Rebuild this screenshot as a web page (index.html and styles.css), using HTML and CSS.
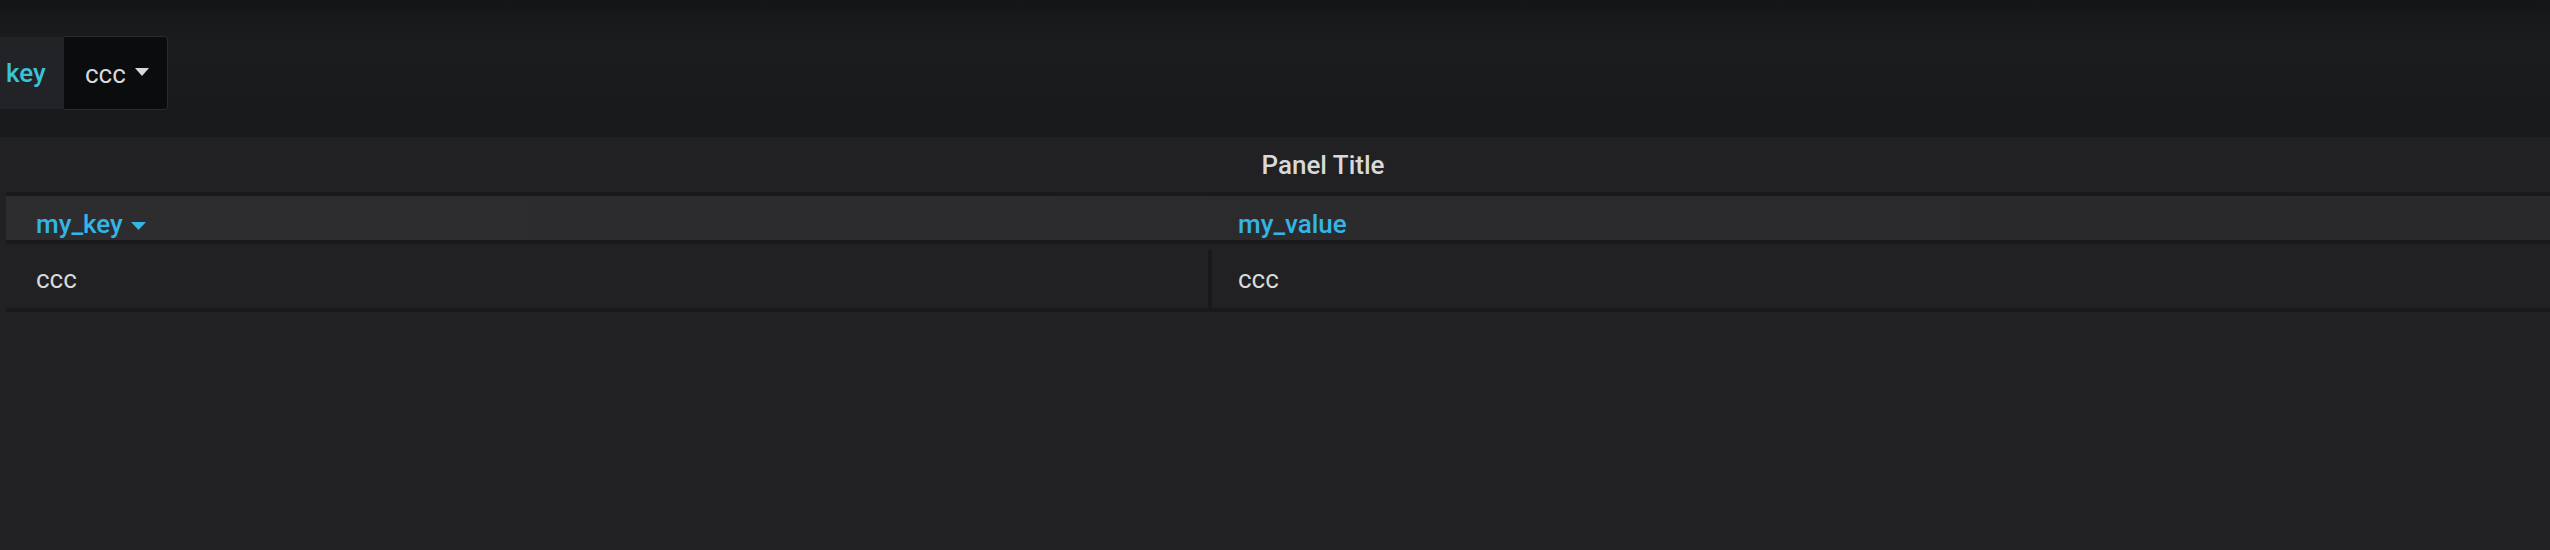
FILE: index.html
```html
<!DOCTYPE html>
<html>
<head>
<meta charset="utf-8">
<link rel="stylesheet" href="styles.css">
</head>
<body>
<div class="topbar">
  <div class="var">
    <div class="var-label">key</div>
    <div class="var-select">
      <span class="var-value">ccc</span>
      <svg class="caret" width="14" height="8" viewBox="0 0 14 8"><path d="M0 0H14L7 8Z" fill="#d8d9da"/></svg>
    </div>
  </div>
</div>
<div class="panel">
  <div class="panel-title">Panel Title</div>
  <div class="table">
    <div class="thead">
      <div class="th th-key">my_key <svg class="caret" width="15" height="8" viewBox="0 0 15 8"><path d="M0 0H15L7.5 8Z" fill="#33b5e5"/></svg></div>
      <div class="th th-val">my_value</div>
    </div>
    <div class="trow">
      <div class="td td-key">ccc</div>
      <div class="td td-val"><div class="td-inner">ccc</div></div>
    </div>
  </div>
</div>
</body>
</html>
```
FILE: styles.css
```css
html, body {
  margin: 0;
  padding: 0;
}
body {
  background: #212124;
  font-family: Roboto, "Liberation Sans", sans-serif;
  font-size: 26px;
  color: #d8d9da;
  width: 2550px;
  height: 550px;
  overflow: hidden;
}
.topbar {
  height: 137px;
  box-sizing: border-box;
  padding-top: 36px;
  background: linear-gradient(#141517 0px, #1b1c1e 40px, #18191b 137px);
}
.var {
  display: flex;
  align-items: center;
  height: 74px;
}
.var-label {
  width: 64px;
  height: 72px;
  box-sizing: border-box;
  padding-left: 6px;
  background: #222326;
  color: #3cc2d8;
  font-weight: 500;
  line-height: 72px;
}
.var-select {
  display: flex;
  align-items: center;
  height: 74px;
  box-sizing: border-box;
  padding: 0 18px 0 21px;
  background: #0b0c0e;
  border: 1px solid #2a2b2e;
  border-left: none;
  border-radius: 0 4px 4px 0;
}
.var-value {
  line-height: 31px;
  margin-top: 3px;
}
.var-select .caret {
  margin-left: 9px;
  margin-top: -2px;
}
.panel-title {
  height: 55px;
  box-sizing: border-box;
  padding: 13px 0 0 96px;
  line-height: 31px;
  text-align: center;
  font-weight: 500;
  color: #d8d9da;
}
.table {
  margin-left: 6px;
}
.thead {
  display: flex;
  height: 52px;
  box-sizing: border-box;
  border-top: 4px solid #19191b;
  border-bottom: 4px solid #19191b;
  background: linear-gradient(90deg, #2d2d30, #29292c);
}
.th {
  box-sizing: border-box;
  padding: 13px 0 0 30px;
  line-height: 31px;
  color: #33b5e5;
  font-weight: 500;
}
.th-key {
  width: 1202px;
}
.th .caret {
  margin-left: 2px;
  vertical-align: 3px;
}
.trow {
  display: flex;
  height: 68px;
  box-sizing: border-box;
  border-bottom: 4px solid #19191b;
}
.td-key {
  width: 1202px;
  box-sizing: border-box;
  padding: 20px 0 0 30px;
  line-height: 31px;
}
.td-val {
  flex: 1;
  padding-top: 6px;
}
.td-inner {
  height: 58px;
  box-sizing: border-box;
  border-left: 4px solid #19191b;
  padding: 14px 0 0 26px;
  line-height: 31px;
}
```
